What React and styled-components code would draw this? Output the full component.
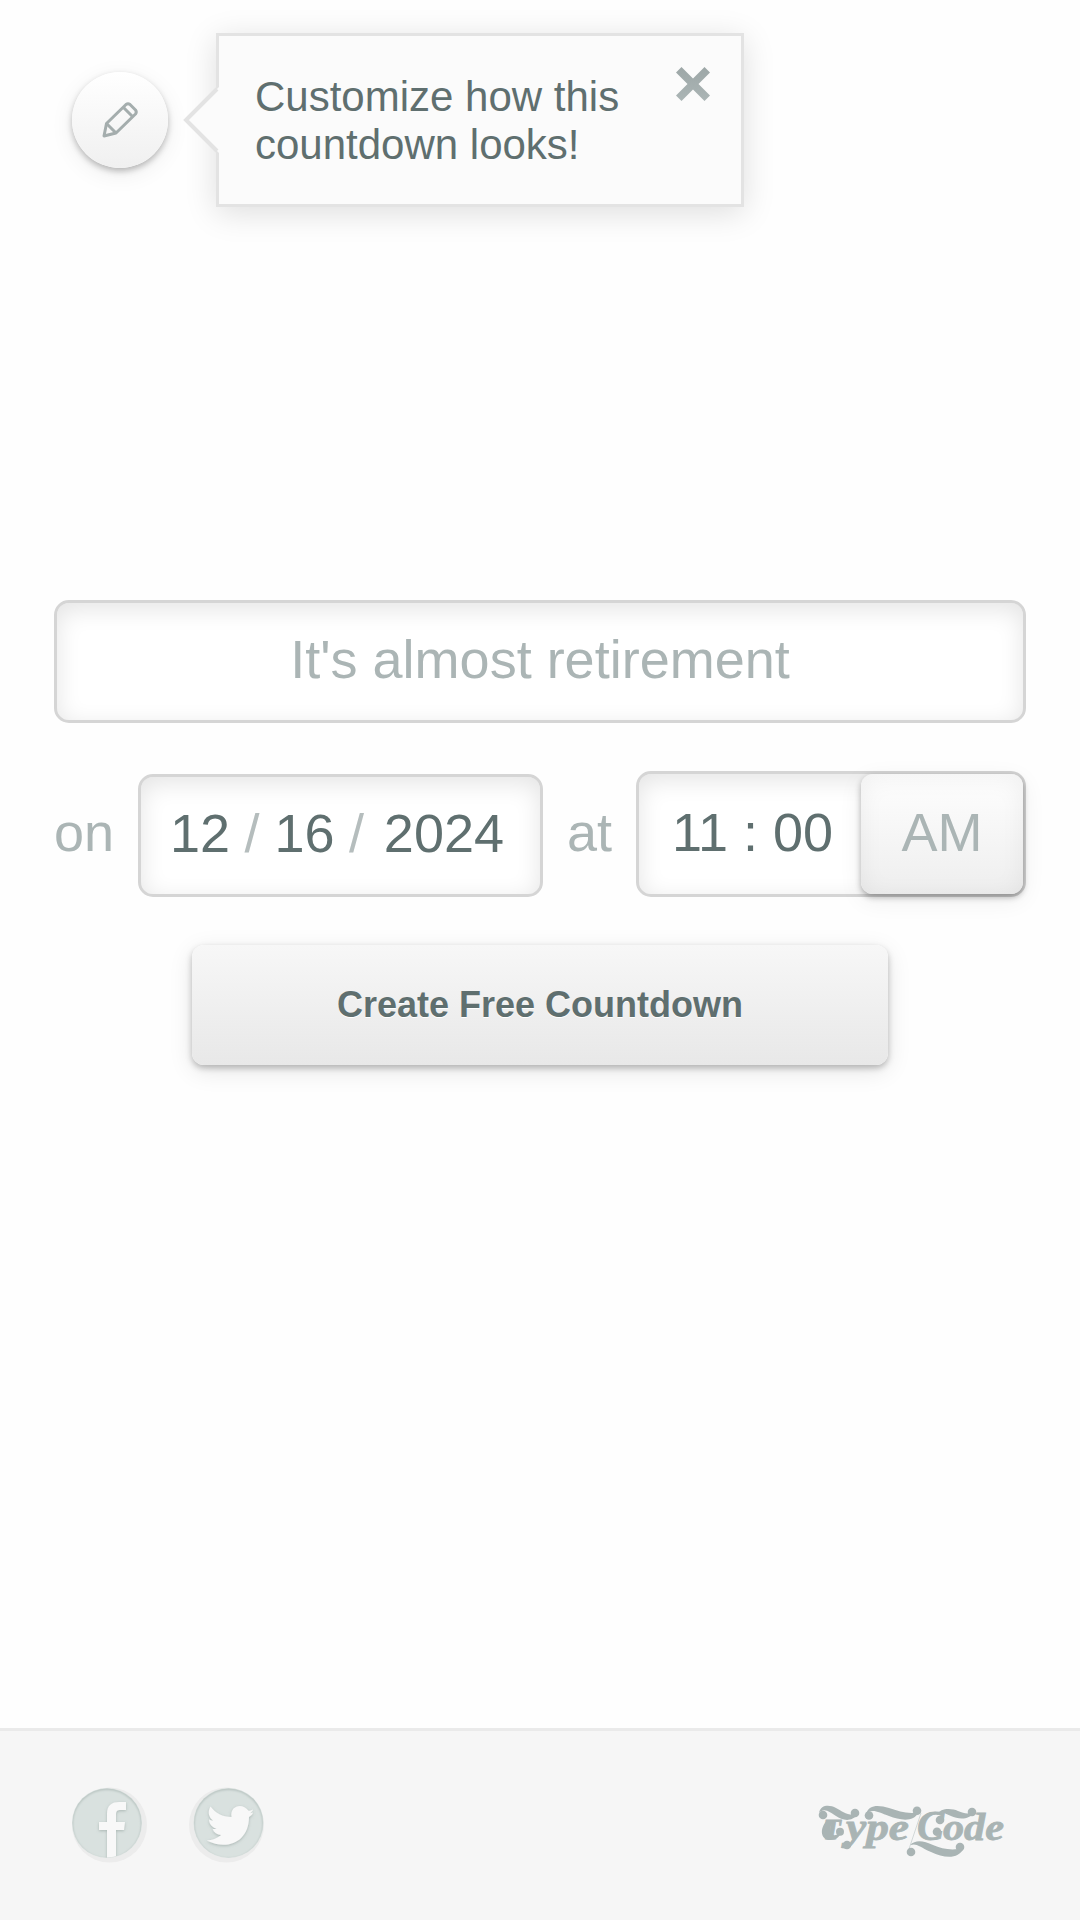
import React from "react";
import styled, { createGlobalStyle } from "styled-components";

const GlobalStyle = createGlobalStyle`
  body {
    margin: 0;
    background: #fefefe;
    font-family: "Liberation Sans", Arial, sans-serif;
    color: #5f6f6f;
  }

  * {
    box-sizing: border-box;
  }
`;

const Page = styled.div`
  min-height: 1920px;
  display: flex;
  flex-direction: column;
`;

const Header = styled.header`
  height: 600px;
  display: flex;
  align-items: flex-start;
  padding: 33px 72px;
`;

const EditButton = styled.button`
  width: 96px;
  height: 96px;
  margin: 39px 48px 0 0;
  padding: 0;
  border: 0;
  border-radius: 50%;
  display: flex;
  align-items: center;
  justify-content: center;
  background: linear-gradient(#ffffff, #f0f0f0);
  box-shadow: 0 3px 6px rgba(0, 0, 0, 0.26), 0 6px 24px rgba(0, 0, 0, 0.07);
`;

const Tooltip = styled.div`
  position: relative;
  width: 528px;
  height: 174px;
  padding: 37px 30px 0 36px;
  display: flex;
  align-items: flex-start;
  justify-content: space-between;
  border: 3px solid #e3e3e3;
  background: #fbfbfb;
  box-shadow: 0 6px 30px rgba(0, 0, 0, 0.13);
`;

const Arrow = styled.svg`
  position: absolute;
  left: -36px;
  top: 50px;
`;

const TooltipText = styled.p`
  margin: 0;
  font-size: 42px;
  line-height: 48px;
`;

const CloseButton = styled.button`
  display: flex;
  margin-top: -7px;
  padding: 0;
  border: 0;
  background: none;
`;

const Form = styled.form`
  padding: 0 54px;
  display: flex;
  flex-direction: column;
`;

const Field = styled.div`
  height: ${({ $height }) => $height || 123}px;
  width: ${({ $width }) => $width};
  display: flex;
  align-items: center;
  border: 3px solid #d5d5d5;
  border-radius: 15px;
  background: #fff;
  box-shadow: inset 0 6px 24px rgba(0, 0, 0, 0.11);
  font-size: 54px;
  line-height: 62px;
`;

const TitleInput = styled.input`
  width: 100%;
  padding: 0 0 6px;
  border: 0;
  outline: 0;
  background: none;
  font: inherit;
  text-align: center;

  &::placeholder {
    color: #abb5b5;
    opacity: 1;
  }
`;

const DateRow = styled.div`
  display: flex;
  align-items: flex-end;
  margin-top: 48px;
`;

const Label = styled.span`
  width: ${({ $width }) => $width}px;
  padding-left: ${({ $indent }) => $indent || 0}px;
  margin-bottom: 34px;
  font-size: 54px;
  line-height: 62px;
  color: #abb5b5;
`;

const Part = styled.span`
  width: ${({ $width }) => $width}px;
  flex: none;
  margin-bottom: 5px;
  color: #5f6f6f;
  text-align: ${({ $align }) => $align || "left"};
`;

const Slash = styled(Part)`
  color: #b5bdbd;
  text-align: center;
`;

const MeridiemButton = styled.button`
  width: 162px;
  height: 120px;
  margin-left: auto;
  padding: 0 0 4px;
  flex: none;
  border: 0;
  border-radius: 12px;
  background: linear-gradient(#fefefe, #eeeeee);
  box-shadow: inset 0 3px 24px rgba(0, 0, 0, 0.06),
    0 3px 6px rgba(0, 0, 0, 0.3), 0 6px 24px rgba(0, 0, 0, 0.07);
  color: #abb5b5;
  font: inherit;
`;

const SubmitButton = styled.button`
  width: 696px;
  height: 120px;
  margin: 48px auto 0;
  padding: 0 0 1px;
  border: 0;
  border-radius: 12px;
  background: linear-gradient(#f7f7f7, #e8e8e8);
  box-shadow: 0 3px 6px rgba(0, 0, 0, 0.25), 0 6px 24px rgba(0, 0, 0, 0.1);
  color: #5f6f6f;
  font: bold 36px "Liberation Sans", Arial, sans-serif;
  text-shadow: 0 1px 0 #fff;
`;

const Footer = styled.footer`
  height: 192px;
  margin-top: auto;
  padding: 0 72px;
  display: flex;
  align-items: center;
  border-top: 3px solid #eaeaea;
  background: #f6f6f6;
`;

const SocialLink = styled.a`
  display: flex;
  margin: 0 42px 2px 0;
`;

const BrandLink = styled.a`
  display: flex;
  margin: 11px 2px 0 auto;
`;

const LogoSvg = styled.svg`
  overflow: visible;
  fill: #a9b4b4;

  text {
    font-family: "Liberation Serif", serif;
    font-weight: bold;
    font-style: italic;
    stroke: #a9b4b4;
    stroke-width: 0.8;
  }
`;

function PencilIcon() {
  return (
    <svg
      width="36"
      height="36"
      viewBox="0 0 36 36"
      fill="none"
      stroke="#a4adad"
      strokeWidth="3"
      strokeLinejoin="round"
    >
      <path d="M2 34 4.500 21.500 24 2.500Q26 1 28 2.500L33.500 8Q35 10 33.500 12L14 31Z" />
      <path d="m4.500 21.500 9.500 9.500M21.500 5.500l9.500 9.500" />
    </svg>
  );
}

function CloseIcon() {
  return (
    <svg width="36" height="36" viewBox="0 0 36 36">
      <defs>
        <linearGradient id="closeFill" x2="0" y2="1">
          <stop offset="0" stopColor="#9da7a7" />
          <stop offset="1" stopColor="#abb5b5" />
        </linearGradient>
      </defs>
      <path
        fill="url(#closeFill)"
        d="M6.500 1 18 12.500 29.500 1 35 6.500 23.500 18 35 29.500 29.500 35 18 23.500 6.500 35 1 29.500 12.500 18 1 6.500Z"
      />
    </svg>
  );
}

function SocialBadge({ id, cx, children }) {
  return (
    <svg width="75" height="76" viewBox="0 0 75 76">
      <defs>
        <clipPath id={`${id}-clip`}>
          <circle cx={cx} cy="36" r="34.5" />
        </clipPath>
        <filter id={`${id}-shadow`} x="-20%" y="-20%" width="140%" height="140%">
          <feDropShadow dx="0" dy="1" stdDeviation="1.4" floodColor="#7d8d89" floodOpacity=".5" />
        </filter>
        <filter id={`${id}-blur`}>
          <feGaussianBlur stdDeviation="1.3" />
        </filter>
      </defs>
      <circle cx="37.5" cy="38" r="37.5" fill="#ececec" />
      <circle cx={cx} cy="36" r="35" fill="#d9e1df" />
      <g clipPath={`url(#${id}-clip)`}>
        <circle
          cx={cx}
          cy="37"
          r="35.5"
          fill="none"
          stroke="#b3bfbc"
          strokeWidth="2.5"
          filter={`url(#${id}-blur)`}
        />
        <g fill="#f8f8f8" filter={`url(#${id}-shadow)`}>
          {children}
        </g>
      </g>
    </svg>
  );
}

function TypeCodeLogo() {
  return (
    <LogoSvg width="188" height="56" viewBox="0 0 188 56">
      <text x="5" y="36" fontSize="29">T</text>
      <text x="28" y="36.5" fontSize="38" textLength="63" lengthAdjust="spacingAndGlyphs">ype</text>
      <text x="99" y="36.5" fontSize="42" textLength="27" lengthAdjust="spacingAndGlyphs">C</text>
      <text x="125" y="36.5" fontSize="38" textLength="61" lengthAdjust="spacingAndGlyphs">ode</text>

      {/* swashes */}
      <path d="M1 10C3 1 12 2 18 5S30 14 40 11C33 20 24 17 18 13S6 4 1 10Z" />
      <path d="M48 11C51 1 61 2 71 5S91 12 101 9C95 20 82 17 71 13S54 5 48 11Z" />
      <path d="M119 12C122 5 133 5 140 8S150 11 157 9C150 18 140 16 133 13S124 8 119 12Z" />
      <path d="M92 42C98 36 106 38 115 42S134 48 146 45C140 57 126 55 113 49S99 40 92 42Z" />
      <path d="M10 17C1 24 2 38 13 37 19 37 23 32 24 28 20 33 13 34 12 28 12 23 14 20 16 17Z" />
      <path d="M103 10 91 46" fill="none" stroke="#c9d0d0" strokeWidth=".8" />

      <circle cx="5" cy="12" r="4.3" />
      <circle cx="37" cy="10" r="4.3" />
      <circle cx="51" cy="12.5" r="4.3" />
      <circle cx="99" cy="7.7" r="4.3" />
      <circle cx="154" cy="9" r="4.3" />
      <circle cx="93" cy="49" r="4.3" />
      <circle cx="142" cy="44" r="4.3" />
      <circle cx="22" cy="28.7" r="4" />
      <circle cx="29" cy="42" r="4.3" />
      <circle cx="122" cy="17" r="4.3" />
      <circle cx="119" cy="28.7" r="4.3" />
    </LogoSvg>
  );
}

export default function App() {
  return (
    <>
      <GlobalStyle />
      <Page>
        <Header>
          <EditButton type="button" aria-label="Edit">
            <PencilIcon />
          </EditButton>
          <Tooltip>
            <Arrow width="36" height="68" viewBox="0 0 36 68">
              <path d="M36 1 3 34l33 33Z" fill="#fbfbfb" />
              <path d="M34 3 3 34l31 31" fill="none" stroke="#e3e3e3" strokeWidth="4" />
            </Arrow>
            <TooltipText>
              Customize how this
              <br />
              countdown looks!
            </TooltipText>
            <CloseButton type="button" aria-label="Close">
              <CloseIcon />
            </CloseButton>
          </Tooltip>
        </Header>

        <Form>
          <Field $width="100%">
            <TitleInput placeholder="It's almost retirement" />
          </Field>
          <DateRow>
            <Label $width={84}>on</Label>
            <Field $width="405px">
              <Part $width={89} $align="right">12</Part>
              <Slash $width={44}>/</Slash>
              <Part $width={61} $align="center">16</Part>
              <Slash $width={43}>/</Slash>
              <Part $width={126} $align="right">2024</Part>
            </Field>
            <Label $width={93} $indent={24}>at</Label>
            <Field $width="390px" $height={126}>
              <Part $width={89} $align="right">11</Part>
              <Part $width={45} $align="center">:</Part>
              <Part $width={70}>00</Part>
              <MeridiemButton type="button">AM</MeridiemButton>
            </Field>
          </DateRow>
          <SubmitButton type="button">Create Free Countdown</SubmitButton>
        </Form>

        <Footer>
          <SocialLink aria-label="Facebook">
            <SocialBadge id="facebook" cx={35}>
              <path d="M35 78V43h-8v-8h8v-8c0-9 5-12 12-12h7v8h-5c-4 0-5 1-5 5v7h9l-1 8h-8v35Z" />
            </SocialBadge>
          </SocialLink>
          <SocialLink aria-label="Twitter">
            <SocialBadge id="twitter" cx={39.5}>
              <path d="M64 22.500c-1.500.9-3 1.200-4.500 1.300-6-8.500-19-5-17 6.200-9 0-16-4-21-10.500-3.500 6-1.300 11 2.500 14-1.500 0-3-.5-4-1 .2 5 3.500 8 7.500 9.200-1.500.4-3 .3-4 .1 1.500 4 4.500 6 8.700 6.300-4.500 3.500-9 5-14.500 5.500C38 64 60 55 60 30c2-1.200 3.500-2.500 4-4.500l-3 .8c1.500-1 2.500-2.200 3-3.800Z" />
            </SocialBadge>
          </SocialLink>
          <BrandLink aria-label="Type/Code">
            <TypeCodeLogo />
          </BrandLink>
        </Footer>
      </Page>
    </>
  );
}
